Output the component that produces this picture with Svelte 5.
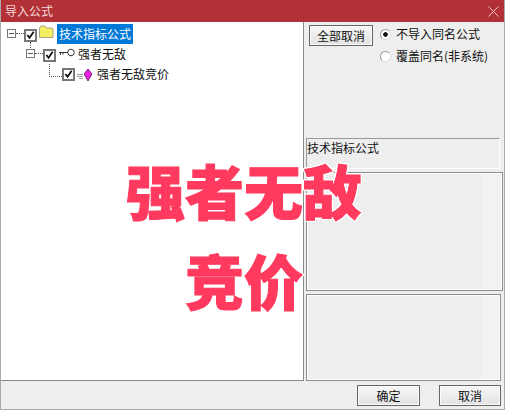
<script>
	// tree rows of the import dialog
	const rows = [
		{ level: 0, label: '技术指标公式', icon: 'folder', open: true, selected: true },
		{ level: 1, label: '强者无敌', icon: 'key', open: true },
		{ level: 2, label: '强者无敌竞价', icon: 'gem' }
	];
</script>

<div class="dialog">
	<header class="title">
		<span>导入公式</span>
		<svg class="close" width="11" height="11" viewBox="0 0 11 11"><path d="M.5.5l10 10M10.5.5l-10 10" /></svg>
	</header>

	<div class="main">
		<div class="tree">
			{#each rows as row}
				<div class="row level{row.level}">
					{#if row.open}
						<span class="expander"></span><span class="dots"></span>
					{:else}
						<span class="elbow"></span>
					{/if}
					<span class="check">
						<svg width="10" height="10" viewBox="0 0 10 10"><path d="M1.500 5l2.500 3 4.500-6.500" /></svg>
					</span>
					{#if row.icon === 'folder'}
						<svg class="icon folder" width="16" height="14" viewBox="0 0 16 14">
							<path d="M1.500 12.500V3l1.500-2h4l1.500 2h5.500l1 1v8.500z" />
						</svg>
					{:else if row.icon === 'key'}
						<svg class="icon key" width="16" height="10" viewBox="0 0 16 10">
							<path d="M0 4.500h9M1.500 4.500v2.500M4 4.500v2" />
							<circle cx="12" cy="4.500" r="3.300" />
						</svg>
					{:else}
						<svg class="icon gem" width="16" height="14" viewBox="0 0 16 14">
							<path class="gem-lines" d="M0 6.500h6M0 8.500h6M2 10.500h4" />
							<path class="gem-body" d="M11 1l4 5-4 7-4-7z" />
						</svg>
					{/if}
					<span class="label" class:selected={row.selected}>{row.label}</span>
				</div>
			{/each}
		</div>

		<aside class="side">
			<div class="options">
				<button class="btn all">全部取消</button>
				<div class="radios">
					<label class="radio"><span class="dot on"></span>不导入同名公式</label>
					<label class="radio"><span class="dot"></span>覆盖同名(非系统)</label>
				</div>
			</div>
			<div class="name-box">技术指标公式</div>
			<div class="panel mid"></div>
			<div class="panel low"></div>
		</aside>
	</div>

	<footer class="actions">
		<button class="btn ok">确定</button>
		<button class="btn cancel">取消</button>
	</footer>

	<div class="stamp">
		<div>强者无敌</div>
		<div class="second">竞价</div>
	</div>
</div>

<style>
	:global(body) {
		margin: 0;
		background: #eeeeee;
	}

	.dialog {
		position: relative;
		box-sizing: border-box;
		width: 505px;
		height: 410px;
		display: flex;
		flex-direction: column;
		background: #eeeeee;
		border: solid #a9a9a9;
		border-width: 0 1px 1px 1px;
		font: 12px/16px "Noto Sans CJK SC", "Liberation Sans", sans-serif;
		color: #111;
		overflow: hidden;
	}

	.title {
		height: 22px;
		margin: 0 -1px;
		padding: 0 6px 0 5px;
		flex: none;
		display: flex;
		align-items: center;
		justify-content: space-between;
		background: #b13136;
		color: #f4dcdc;
	}

	.close path {
		fill: none;
		stroke: #e9c4c5;
	}

	.main {
		flex: 1;
		display: flex;
		min-height: 0;
	}

	.tree {
		box-sizing: border-box;
		width: 304px;
		height: 359px;
		flex: none;
		padding-top: 2px;
		background: #fff;
		border: solid #8a8a8a;
		border-width: 0 1px 1px 1px;
		margin-left: -1px;
	}

	.row {
		position: relative;
		height: 20px;
		display: flex;
		align-items: center;
	}

	.level0 { padding-left: 6px; }
	.level1 { padding-left: 25px; }
	.level2 { padding-left: 48px; }

	.expander {
		position: relative;
		box-sizing: border-box;
		width: 9px;
		height: 9px;
		flex: none;
		margin-top: -2px;
		border: 1px solid #777;
		background: linear-gradient(#555, #555) center / 5px 1px no-repeat;
	}

	.dots {
		width: 8px;
		flex: none;
		margin-top: -2px;
		border-top: 1px dotted #555;
	}

	.elbow {
		width: 13px;
		height: 13px;
		flex: none;
		margin-top: -8px;
		border-left: 1px dotted #555;
		border-bottom: 1px dotted #555;
		box-sizing: border-box;
	}

	.check {
		position: relative;
		box-sizing: border-box;
		width: 13px;
		height: 13px;
		flex: none;
		display: flex;
		align-items: center;
		justify-content: center;
		border: 2px solid #777;
		background: #fff;
	}

	.level0 .check,
	.level1 .check {
		margin-top: 2px;
	}

	.level0 .check::after {
		content: '';
		position: absolute;
		left: 4px;
		top: 11px;
		height: 8px;
		border-left: 1px dotted #555;
	}

	.check path {
		fill: none;
		stroke: #111;
		stroke-width: 2;
	}

	.icon {
		flex: none;
		margin-left: 2px;
	}

	.folder {
		margin: -5px 0 0 1px;
	}

	.folder path {
		fill: #f6ee62;
		stroke: #a8a48a;
	}

	.key {
		margin: -3px 0 0 3px;
	}

	.key path,
	.key circle {
		fill: #fff;
		stroke: #333;
	}

	.gem {
		margin: 1px 0 0 2px;
	}

	.gem-lines {
		fill: none;
		stroke: #999;
	}

	.gem-body {
		fill: #f020e0;
		stroke: #50105a;
		stroke-width: .8;
	}

	.label {
		margin-left: 3px;
		white-space: nowrap;
	}

	.level2 .label {
		margin-left: 4px;
	}

	.label.selected {
		margin-left: 3px;
		padding: 2px;
		background: #0078d7;
		color: #fff;
	}

	.side {
		flex: 1;
		display: flex;
		flex-direction: column;
		padding-left: 2px;
	}

	.options {
		height: 116px;
		display: flex;
		align-items: flex-start;
		gap: 7px;
		padding: 3px 0 0 3px;
		box-sizing: border-box;
	}

	.btn {
		box-sizing: border-box;
		width: 64px;
		height: 21px;
		padding: 0;
		border: 1px solid #666;
		box-shadow: inset 0 0 0 1px #fafafa;
		background: linear-gradient(#f7f7f7, #e2e2e2);
		font: inherit;
		color: #111;
	}

	.radios {
		display: flex;
		flex-direction: column;
		gap: 6px;
		padding-top: 1px;
	}

	.radio {
		display: flex;
		align-items: center;
		gap: 5px;
		white-space: nowrap;
	}

	.dot {
		box-sizing: border-box;
		width: 11px;
		height: 11px;
		border-radius: 50%;
		background: #fff;
		border: 1px solid #9a9a9a;
		border-right-color: #ddd;
		border-bottom-color: #ddd;
	}

	.dot.on {
		background: radial-gradient(circle, #111 0 2px, #fff 2.500px);
	}

	.name-box {
		box-sizing: border-box;
		width: 194px;
		height: 31px;
		border: solid #fff;
		border-width: 0 1px 1px 0;
		border-top: 1px solid #999;
		border-left: 1px solid #999;
		line-height: 17px;
	}

	.panel {
		box-sizing: border-box;
		border: 1px solid #8c8c8c;
		outline: 1px solid #fff;
		outline-offset: -2px;
		background: linear-gradient(90deg, #eeeeee 90%, #f3f2f0 90%);
	}

	.mid {
		width: 197px;
		height: 119px;
		margin-top: 3px;
	}

	.low {
		width: 195px;
		height: 87px;
		margin-top: 3px;
	}

	.actions {
		height: 28px;
		flex: none;
		display: flex;
		justify-content: flex-end;
		gap: 19px;
		padding: 4px 3px 0 0;
		box-sizing: border-box;
	}

	.ok {
		width: 63px;
	}

	.cancel {
		width: 62px;
	}

	/* red watermark lying over the dialog */
	.stamp {
		position: absolute;
		left: 125px;
		top: 159px;
		width: 240px;
		font-family: "Noto Sans CJK SC", sans-serif;
		font-weight: 900;
		font-size: 59px;
		line-height: 62px;
		color: #ff3a5e;
		-webkit-text-stroke: 1px #ff3a5e;
		filter: drop-shadow(1px 0 0 #fff) drop-shadow(-1px 0 0 #fff) drop-shadow(0 1px 0 #fff) drop-shadow(0 -1px 0 #fff);
		white-space: nowrap;
	}

	.second {
		margin-top: 28px;
		padding-left: 59px;
	}
</style>
